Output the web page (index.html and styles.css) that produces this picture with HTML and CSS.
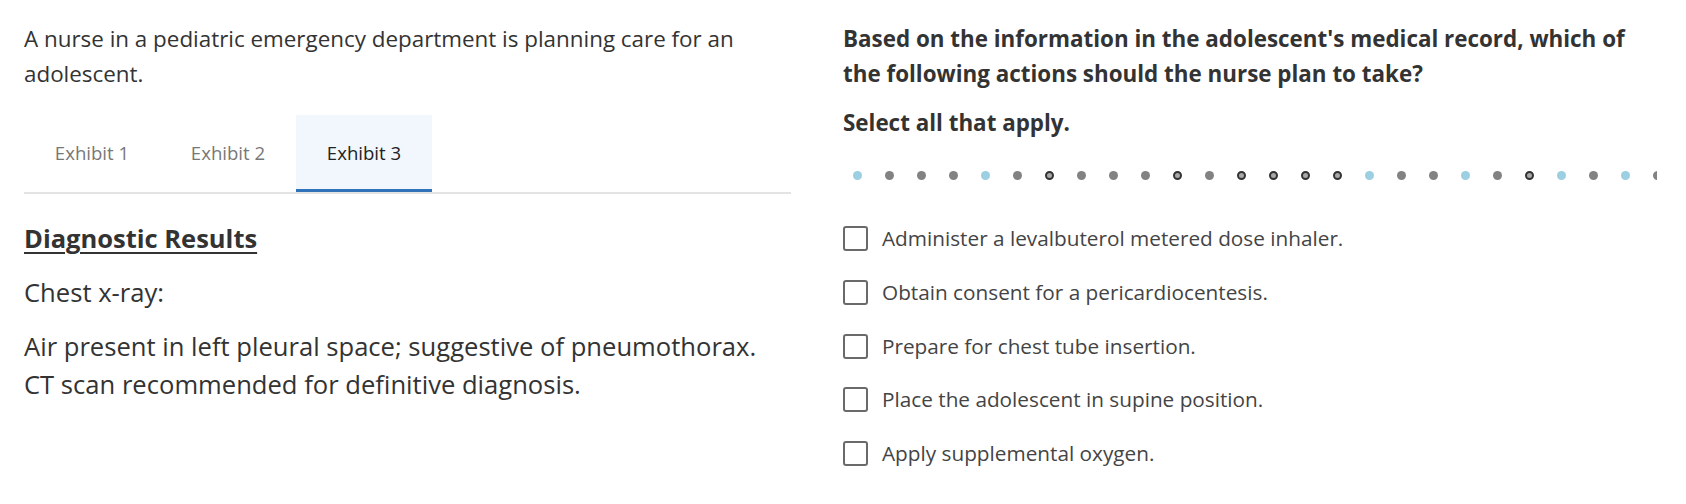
FILE: index.html
```html
<!DOCTYPE html>
<html lang="en">
<head>
<meta charset="utf-8">
<title>Case study</title>
<link rel="stylesheet" href="styles.css">
</head>
<body>
<div class="page">
  <section class="left">
    <p class="intro">A nurse in a pediatric emergency department is planning care for an adolescent.</p>
    <div class="tabs">
      <div class="tab">Exhibit 1</div>
      <div class="tab">Exhibit 2</div>
      <div class="tab active">Exhibit 3</div>
    </div>
    <h2 class="heading">Diagnostic Results</h2>
    <p class="body">Chest x-ray:</p>
    <p class="body">Air present in left pleural space; suggestive of pneumothorax.<br>CT scan recommended for definitive diagnosis.</p>
  </section>
  <section class="right">
    <p class="question">Based on the information in the adolescent's medical record, which of the following actions should the nurse plan to take?</p>
    <p class="question select">Select all that apply.</p>
    <div class="dots">
      <span class="dot blue"></span><span class="dot"></span><span class="dot"></span><span class="dot"></span><span class="dot blue"></span><span class="dot"></span><span class="dot ring"></span><span class="dot"></span><span class="dot"></span><span class="dot"></span><span class="dot ring"></span><span class="dot"></span><span class="dot ring"></span><span class="dot ring"></span><span class="dot ring"></span><span class="dot ring"></span><span class="dot blue"></span><span class="dot"></span><span class="dot"></span><span class="dot blue"></span><span class="dot"></span><span class="dot ring"></span><span class="dot blue"></span><span class="dot"></span><span class="dot blue"></span><span class="dot"></span>
    </div>
    <ul class="options">
      <li class="option"><span class="box"></span>Administer a levalbuterol metered dose inhaler.</li>
      <li class="option"><span class="box"></span>Obtain consent for a pericardiocentesis.</li>
      <li class="option"><span class="box"></span>Prepare for chest tube insertion.</li>
      <li class="option"><span class="box"></span>Place the adolescent in supine position.</li>
      <li class="option"><span class="box"></span>Apply supplemental oxygen.</li>
    </ul>
  </section>
</div>
</body>
</html>
```

FILE: styles.css
```css
* { box-sizing: border-box; }
html, body { margin: 0; padding: 0; background: #fff; }
body {
  font-family: "Open Sans", "DejaVu Sans", sans-serif;
  color: #333;
}
.page {
  display: grid;
  grid-template-columns: 767px 1fr;
  column-gap: 52px;
  padding: 21px 24px 0 24px;
}
.left, .right { min-width: 0; }
.intro {
  margin: 0;
  font-size: 22.4px;
  line-height: 35px;
}
.tabs {
  display: flex;
  margin-top: 24px;
  border-bottom: 2px solid #e3e3e3;
}
.tab {
  height: 77px;
  width: 136px;
  display: flex;
  align-items: center;
  justify-content: center;
  font-size: 18.6px;
  color: #777;
  border-bottom: 3px solid transparent;
}
.tab.active {
  background: #f1f7fd;
  color: #222;
  border-bottom-color: #3173b9;
}
.heading {
  margin: 25px 0 0 0;
  font-size: 25.5px;
  line-height: 39px;
  font-weight: 700;
  text-decoration: underline;
  text-underline-offset: 4px;
  text-decoration-thickness: 2px;
}
.body {
  margin: 16px 0 0 0;
  font-size: 25.6px;
  line-height: 38px;
}
.question {
  margin: 0;
  max-width: 790px;
  font-size: 22.4px;
  line-height: 35px;
  font-weight: 700;
}
.select { margin-top: 14px; }
.dots {
  display: flex;
  gap: 23px;
  padding-left: 10px;
  margin-top: 30px;
  margin-right: 5px;
  overflow: hidden;
  height: 10px;
  align-items: center;
}
.dot {
  flex: 0 0 9px;
  width: 9px;
  height: 9px;
  border-radius: 50%;
  background: #828282;
}
.dot.blue { background: #9dcfe2; }
.dot.ring { background: #a8a8a8; border: 2px solid #333; }
.options {
  list-style: none;
  margin: 43px 0 0 0;
  padding: 0;
  display: flex;
  flex-direction: column;
  gap: 22.8px;
}
.option {
  display: flex;
  align-items: center;
  gap: 14px;
  font-size: 20.75px;
  line-height: 31px;
  color: #444;
}
.box {
  flex: 0 0 25px;
  width: 25px;
  height: 25px;
  border: 2.5px solid #6a6a6a;
  border-radius: 3px;
}
```
